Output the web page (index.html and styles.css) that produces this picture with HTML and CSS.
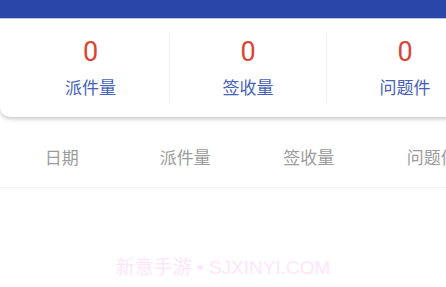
FILE: index.html
```html
<!DOCTYPE html>
<html lang="zh-CN">
<head>
    <meta charset="UTF-8">
    <meta name="viewport" content="width=device-width, initial-scale=1.0">
    <title>统计</title>
    <link rel="stylesheet" href="styles.css">
</head>
<body>

    <div class="topbar"></div>

    <div class="stats">
        <div class="stat">
            <div class="stat-num">0</div>
            <div class="stat-label">派件量</div>
        </div>
        <div class="stat">
            <div class="stat-num">0</div>
            <div class="stat-label">签收量</div>
        </div>
        <div class="stat">
            <div class="stat-num">0</div>
            <div class="stat-label">问题件</div>
        </div>
    </div>

    <div class="table">
        <div class="table-head">
            <div class="cell">日期</div>
            <div class="cell">派件量</div>
            <div class="cell">签收量</div>
            <div class="cell">问题件</div>
        </div>
        <div class="table-body"></div>
    </div>

    <div class="watermark">新意手游 • SJXINYI.COM</div>

</body>
</html>
```

FILE: styles.css
```css
body {
    font-family: Roboto, "Noto Sans CJK SC", sans-serif;
    background-color: #fff;
    margin: 0;
    padding: 0;
    width: 446px;
    height: 287px;
    overflow: hidden;
}
.topbar {
    height: 18px;
    background-color: #2946a9;
    border-bottom: 1px solid #bfcaee;
}
.stats {
    display: flex;
    width: 495px;
    padding: 14px 12px;
    box-sizing: border-box;
    background-color: #fff;
    border-radius: 0 0 10px 10px;
    box-shadow: 0 2px 4px rgba(0, 0, 0, 0.22);
}
.stat {
    flex: 0 0 157px;
    box-sizing: border-box;
    height: 70px;
    text-align: center;
}
.stat + .stat {
    border-left: 1px solid #eeeeee;
}
.stat-num {
    font-size: 27px;
    line-height: 38px;
    color: #db4434;
}
.stat-label {
    margin-top: 4px;
    font-size: 17px;
    line-height: 26px;
    color: #4562b8;
}
.table {
    margin-top: 8px;
}
.table-head {
    display: grid;
    grid-template-columns: repeat(4, 123.5px);
    height: 62px;
    align-items: center;
    border-bottom: 1px solid #f2f2f2;
}
.cell {
    text-align: center;
    font-size: 17px;
    color: #9c9c9c;
    white-space: nowrap;
}
.table-body {
    height: 70px;
}
.watermark {
    text-align: center;
    font-family: "Liberation Sans", "Noto Sans CJK SC", sans-serif;
    font-size: 19px;
    line-height: 20px;
    color: #fde6fa;
}
```
